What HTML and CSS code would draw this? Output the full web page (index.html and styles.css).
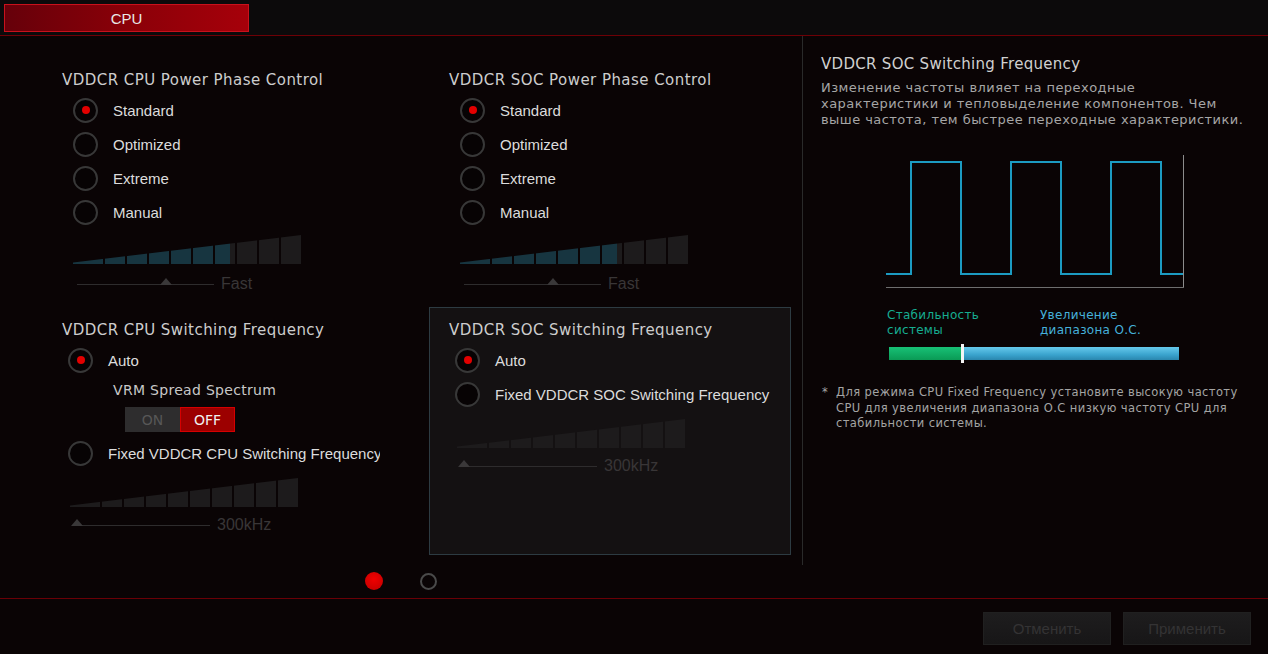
FILE: index.html
```html
<!DOCTYPE html>
<html lang="ru">
<head>
 <meta charset="UTF-8">
 <title>CPU Power</title>
 <link rel="stylesheet" href="styles.css">
</head>
<body>
 <div class="app">
 <header class="topbar">
 <button class="tab">CPU</button>
 </header>

 <main class="main">
 <div class="settings">
 <div class="grid">
 <section class="group">
 <h3 class="group-title">VDDCR CPU Power Phase Control</h3>
 <ul class="options">
 <li class="option checked"><span class="radio"></span>Standard</li>
 <li class="option"><span class="radio"></span>Optimized</li>
 <li class="option"><span class="radio"></span>Extreme</li>
 <li class="option"><span class="radio"></span>Manual</li>
 </ul>
 <div class="meter">
 <span class="seg on"></span><span class="seg on"></span><span class="seg on"></span>
 <span class="seg on"></span><span class="seg on"></span><span class="seg on"></span>
 <span class="seg part"></span><span class="seg"></span><span class="seg"></span><span class="seg"></span>
 </div>
 <div class="scale">
 <span class="track"><i class="thumb" style="left: 65%"></i></span>
 <span class="scale-label">Fast</span>
 </div>
 </section>

 <section class="group">
 <h3 class="group-title">VDDCR SOC Power Phase Control</h3>
 <ul class="options">
 <li class="option checked"><span class="radio"></span>Standard</li>
 <li class="option"><span class="radio"></span>Optimized</li>
 <li class="option"><span class="radio"></span>Extreme</li>
 <li class="option"><span class="radio"></span>Manual</li>
 </ul>
 <div class="meter">
 <span class="seg on"></span><span class="seg on"></span><span class="seg on"></span>
 <span class="seg on"></span><span class="seg on"></span><span class="seg on"></span>
 <span class="seg part"></span><span class="seg"></span><span class="seg"></span><span class="seg"></span>
 </div>
 <div class="scale">
 <span class="track"><i class="thumb" style="left: 65%"></i></span>
 <span class="scale-label">Fast</span>
 </div>
 </section>

 <section class="group group-switch group-clip">
 <h3 class="group-title">VDDCR CPU Switching Frequency</h3>
 <ul class="options">
 <li class="option checked"><span class="radio"></span>Auto</li>
 <li class="spread">
 <div class="spread-title">VRM Spread Spectrum</div>
 <div class="toggle"><span class="toggle-on">ON</span><span class="toggle-off">OFF</span></div>
 </li>
 <li class="option"><span class="radio"></span>Fixed VDDCR CPU Switching Frequency</li>
 </ul>
 <div class="meter">
 <span class="seg"></span><span class="seg"></span><span class="seg"></span><span class="seg"></span><span class="seg"></span>
 <span class="seg"></span><span class="seg"></span><span class="seg"></span><span class="seg"></span><span class="seg"></span>
 </div>
 <div class="scale">
 <span class="track"><i class="thumb" style="left: 3%"></i></span>
 <span class="scale-label">300kHz</span>
 </div>
 </section>

 <section class="group group-switch group-box">
 <h3 class="group-title">VDDCR SOC Switching Frequency</h3>
 <ul class="options">
 <li class="option checked"><span class="radio"></span>Auto</li>
 <li class="option"><span class="radio"></span>Fixed VDDCR SOC Switching Frequency</li>
 </ul>
 <div class="meter">
 <span class="seg"></span><span class="seg"></span><span class="seg"></span><span class="seg"></span><span class="seg"></span>
 <span class="seg"></span><span class="seg"></span><span class="seg"></span><span class="seg"></span><span class="seg"></span>
 </div>
 <div class="scale">
 <span class="track"><i class="thumb" style="left: 3%"></i></span>
 <span class="scale-label">300kHz</span>
 </div>
 </section>
 </div>

 <div class="pager">
 <span class="dot active"></span>
 <span class="dot"></span>
 </div>
 </div>

 <aside class="side">
 <h3 class="side-title">VDDCR SOC Switching Frequency</h3>
 <p class="side-desc">Изменение частоты влияет на переходные<br>характеристики и тепловыделение компонентов. Чем<br>выше частота, тем быстрее переходные характеристики.</p>

 <svg class="wave" width="300" height="135" viewBox="0 0 300 135">
 <polyline points="0,119 25,119 25,7 75,7 75,119 125,119 125,7 175,7 175,119 225,119 225,7 275,7 275,119 297,119"
 fill="none" stroke="#1c9bc2" stroke-width="2"></polyline>
 <line x1="297.5" y1="0" x2="297.5" y2="132.5" stroke="#8c8c8c" stroke-width="1"></line>
 <line x1="0" y1="132.5" x2="298" y2="132.5" stroke="#6e6e6e" stroke-width="1"></line>
 </svg>

 <div class="legend">
 <span class="legend-stable">Стабильность<br>системы</span>
 <span class="legend-oc">Увеличение<br>диапазона О.С.</span>
 </div>
 <div class="freq-bar">
 <span class="freq-low"></span>
 <span class="freq-mark"></span>
 <span class="freq-high"></span>
 </div>

 <p class="note"><span class="note-star">*</span><span>Для режима CPU Fixed Frequency установите высокую частоту<br>CPU для увеличения диапазона О.С низкую частоту CPU для<br>стабильности системы.</span></p>
 </aside>
 </main>

 <footer class="footer">
 <button class="action">Отменить</button>
 <button class="action">Применить</button>
 </footer>
 </div>
</body>
</html>
```

FILE: styles.css
```css
* {
 margin: 0;
 padding: 0;
 box-sizing: border-box;
}
body {
 background: #0a0405;
 font-family: "DejaVu Sans", sans-serif;
 color: #d2d2d2;
 width: 1268px;
 height: 654px;
 overflow: hidden;
}
.app {
 display: flex;
 flex-direction: column;
 height: 654px;
}

/* top tab bar */
.topbar {
 height: 36px;
 padding: 4px 0 0 4px;
 background: #0c0a0b;
 border-bottom: 1px solid #6e0006;
}
.tab {
 display: block;
 width: 245px;
 height: 28px;
 border: 1px solid #c8121c;
 background: linear-gradient(to right, #66000a 0%, #8a0008 50%, #a6000a 100%);
 color: #e8e8e8;
 font-family: "Liberation Sans", Arial, sans-serif;
 font-size: 15px;
}

/* main area */
.main {
 display: flex;
 height: 562px;
}
.settings {
 width: 802px;
 display: flex;
 flex-direction: column;
}
.grid {
 display: grid;
 grid-template-columns: 387px 362px;
 grid-template-rows: 250px 248px;
 padding: 21px 0 0 42px;
}
.group {
 padding: 14px 20px 12px;
 overflow: hidden;
}
.group-clip .options {
 width: 312px;
}
.group-box {
 background: #141112;
 border: 1px solid #2d3b42;
 padding: 13px 19px 11px;
}
.group-title {
 font-size: 15px;
 font-weight: normal;
 line-height: 18px;
 letter-spacing: 0.45px;
 color: #cdcdcd;
 margin-bottom: 4px;
 white-space: nowrap;
}
.options {
 list-style: none;
 margin-left: 11px;
}
.group-switch .options {
 margin-left: 6px;
}
.option {
 display: flex;
 align-items: center;
 height: 34px;
 font-family: "Liberation Sans", Arial, sans-serif;
 font-size: 15px;
 color: #dcdcdc;
 white-space: nowrap;
 overflow: hidden;
}
.radio {
 flex-shrink: 0;
 width: 25px;
 height: 25px;
 margin-right: 15px;
 border-radius: 50%;
 border: 2px solid #383838;
 background: #070304;
 display: grid;
 place-items: center;
}
.checked .radio::after {
 content: "";
 width: 8px;
 height: 8px;
 border-radius: 50%;
 background: #e30000;
}

/* VRM spread spectrum */
.spread {
 padding: 4px 0 4px 45px;
}
.spread-title {
 font-size: 14px;
 line-height: 18px;
 letter-spacing: 0.3px;
 color: #c8c8c8;
}
.toggle {
 display: flex;
 margin: 8px 0 0 12px;
 height: 25px;
}
.toggle span {
 width: 55px;
 display: grid;
 place-items: center;
 font-size: 14px;
}
.toggle-on {
 background: #2e2d2e;
 color: #575757;
}
.toggle-off {
 background: #9c0000;
 border: 1px solid #d60000;
 color: #f0f0f0;
}

/* level meter */
.meter {
 display: flex;
 gap: 2px;
 width: 228px;
 height: 29px;
 margin: 6px 0 0 11px;
 clip-path: polygon(0 95%, 100% 0, 100% 100%, 0 100%);
}
.group-switch .meter {
 margin: 8px 0 0 8px;
}
.seg {
 width: 20px;
 background: #1d1b1c;
}
.seg:first-child {
 width: 30px;
}
.seg.on {
 background: #173540;
}
.seg.part {
 background: linear-gradient(to right, #173540 0 75%, #1d1b1c 75%);
}

.scale {
 display: flex;
 align-items: center;
 height: 18px;
 margin: 11px 0 0 15px;
}
.group-switch .scale {
 margin: 9px 0 0 11px;
}
.track {
 position: relative;
 width: 137px;
 height: 1px;
 background: #2e2c2d;
}
.thumb {
 position: absolute;
 bottom: 0;
 width: 0;
 height: 0;
 border-left: 6px solid transparent;
 border-right: 6px solid transparent;
 border-bottom: 7px solid #3a3839;
 transform: translateX(-50%);
}
.scale-label {
 margin-left: 7px;
 font-family: "Liberation Sans", Arial, sans-serif;
 font-size: 16px;
 color: #393637;
}

.pager {
 display: flex;
 justify-content: center;
 align-items: center;
 gap: 37px;
 margin-top: 17px;
}
.dot {
 width: 17px;
 height: 17px;
 border-radius: 50%;
 border: 2px solid #4a4a4a;
}
.dot.active {
 width: 18px;
 height: 18px;
 border: none;
 background: radial-gradient(circle at 50% 40%, #f00000, #c00000);
}

/* help panel */
.side {
 flex: 1;
 border-left: 1px solid #2a2a2a;
 margin-bottom: 33px;
 padding: 19px 18px 0 18px;
}
.side-title {
 font-size: 15px;
 font-weight: normal;
 line-height: 18px;
 letter-spacing: 0.3px;
 color: #d0d0d0;
}
.side-desc {
 margin-top: 7px;
 font-size: 13px;
 line-height: 16px;
 letter-spacing: 0.45px;
 color: #a6a6a6;
 white-space: nowrap;
}
.wave {
 display: block;
 margin: 27px 0 0 65px;
}
.legend {
 display: flex;
 margin: 18px 0 0 66px;
 font-size: 12px;
 line-height: 15px;
 letter-spacing: 0.3px;
}
.legend-stable {
 width: 153px;
 color: #16ad91;
}
.legend-oc {
 color: #45b0da;
}
.freq-bar {
 display: flex;
 align-items: center;
 width: 290px;
 height: 13px;
 margin: 9px 0 0 68px;
}
.freq-low {
 width: 72px;
 height: 13px;
 background: linear-gradient(#18c176, #0a9a55);
}
.freq-mark {
 width: 3px;
 height: 19px;
 background: #f4f4f4;
}
.freq-high {
 flex: 1;
 height: 13px;
 background: linear-gradient(#66c9ec, #3aa3cd 60%, #2a86ae);
}
.note {
 display: flex;
 margin-top: 25px;
 padding-left: 1px;
 font-size: 11.5px;
 line-height: 15.5px;
 letter-spacing: 0.4px;
 color: #a4a4a4;
 white-space: nowrap;
}
.note-star {
 width: 14px;
 flex-shrink: 0;
}

/* footer */
.footer {
 flex: 1;
 display: flex;
 justify-content: flex-end;
 gap: 12px;
 padding: 13px 17px 0 0;
 border-top: 1px solid #6a0006;
}
.action {
 width: 128px;
 height: 33px;
 border: 1px solid #202020;
 background: linear-gradient(#1e1d1e, #171617);
 color: #343334;
 font-family: "Liberation Sans", Arial, sans-serif;
 font-size: 15px;
}
```
